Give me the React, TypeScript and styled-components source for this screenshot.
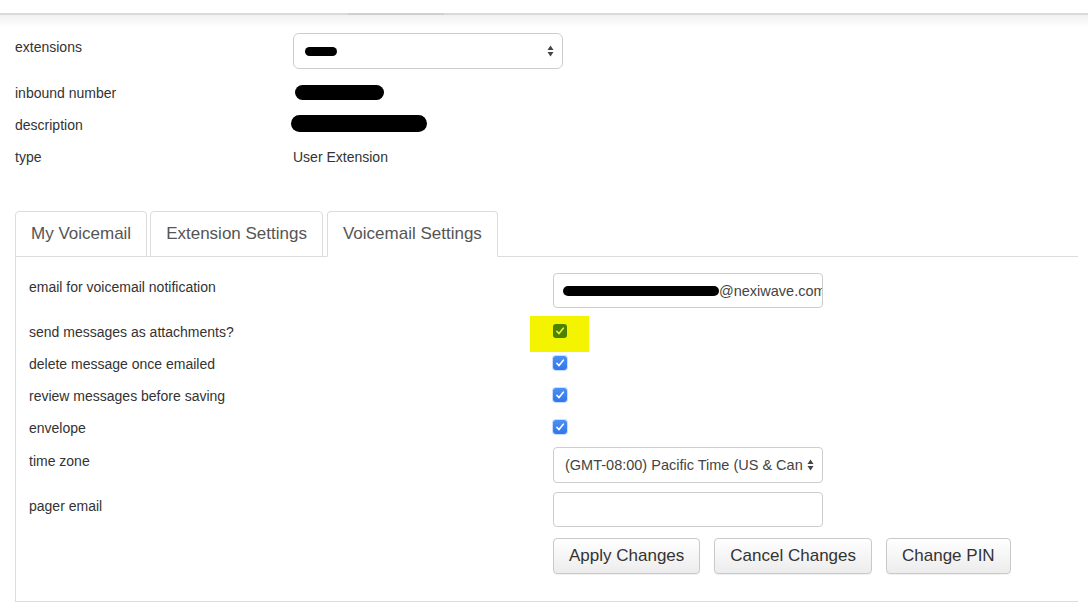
import React, { FC } from 'react';
import styled, { createGlobalStyle, css } from 'styled-components';

const GlobalStyle = createGlobalStyle`
  html, body {
    margin: 0;
    padding: 0;
    background: #fff;
  }
  body {
    font-family: 'Liberation Sans', Arial, sans-serif;
    color: #333;
    font-size: 14px;
  }
`;

const Page = styled.div`
  width: 1088px;
  height: 608px;
  overflow: hidden;
`;

const TopBar = styled.div`
  height: 13px;
  display: flex;
  align-items: flex-end;
  border-bottom: 2px solid #dadada;
`;

const TopMark = styled.div`
  width: 96px;
  height: 2px;
  margin-left: 348px;
  margin-bottom: -2px;
  background: #cfcfcf;
`;

const TopShade = styled.div`
  height: 13px;
  background: linear-gradient(#f1f1f1, #fff);
`;

const InfoGrid = styled.div`
  display: grid;
  grid-template-columns: 278px 270px;
  padding-left: 15px;
  margin-top: 5px;
`;

const InfoLabel = styled.div<{ $tall?: boolean }>`
  line-height: 20px;
  height: ${({ $tall }) => ($tall ? '44px' : '32px')};
  padding-top: ${({ $tall }) => ($tall ? '4px' : '6px')};
  box-sizing: border-box;
`;

const InfoValue = styled.div<{ $tall?: boolean }>`
  height: ${({ $tall }) => ($tall ? '44px' : '32px')};
  display: flex;
  align-items: ${({ $tall }) => ($tall ? 'flex-start' : 'center')};
  line-height: 20px;
`;

const Redaction = styled.span<{ $w: number; $h: number }>`
  display: inline-block;
  flex-shrink: 0;
  width: ${({ $w }) => $w}px;
  height: ${({ $h }) => $h}px;
  background: #000;
  border-radius: ${({ $h }) => $h / 2}px;
`;

const SelectBox = styled.div<{ $radius?: number }>`
  width: 270px;
  height: 36px;
  box-sizing: border-box;
  border: 1px solid #cdcdcd;
  border-radius: ${({ $radius }) => $radius ?? 4}px;
  display: flex;
  align-items: center;
  padding: 0 8px 0 11px;
  gap: 4px;
  background: #fff;
  font-size: 14px;
  color: #444;
`;

const SelectText = styled.span`
  flex: 1;
  overflow: hidden;
  white-space: nowrap;
  font-size: 14.5px;
`;

const Arrows: FC = () => (
  <svg width="7" height="12" viewBox="0 0 7 12">
    <path d="M3.5 0.5 L6.5 5 L0.5 5 Z" fill="#444" />
    <path d="M3.5 11.5 L6.5 7 L0.5 7 Z" fill="#444" />
  </svg>
);

const TabsWrap = styled.div`
  margin: 38px 10px 0 15px;
`;

const TabList = styled.div`
  display: flex;
  gap: 3px;
  border-bottom: 1px solid #dcdcdc;
`;

const Tab = styled.div<{ $active?: boolean }>`
  height: 44px;
  padding: 0 15px;
  display: flex;
  align-items: center;
  font-size: 17px;
  color: #555;
  border: 1px solid #dcdcdc;
  border-radius: 4px 4px 0 0;
  margin-bottom: -1px;
  background: #fff;
  ${({ $active }) =>
    $active &&
    css`
      border-bottom-color: #fff;
      margin-left: 1px;
    `}
`;

const Panel = styled.div`
  border-left: 1px solid #dcdcdc;
  border-bottom: 1px solid #dcdcdc;
  padding: 16px 0 27px 13px;
  display: grid;
  grid-template-columns: 524px 1fr;
`;

const FormLabel = styled.div<{ $h: number; $pt?: number }>`
  height: ${({ $h }) => $h}px;
  padding-top: ${({ $pt }) => $pt ?? 0}px;
  box-sizing: border-box;
  line-height: ${({ $pt }) => ($pt === undefined ? '32px' : '20px')};
`;

const FormValue = styled.div<{ $h: number; $pt?: number; $center?: boolean }>`
  height: ${({ $h }) => $h}px;
  padding-top: ${({ $pt }) => $pt ?? 0}px;
  box-sizing: border-box;
  display: flex;
  align-items: ${({ $center }) => ($center ? 'center' : 'flex-start')};
`;

const TextField = styled.div`
  width: 270px;
  height: 35px;
  box-sizing: border-box;
  border: 1px solid #cdcdcd;
  border-radius: 4px;
  display: flex;
  align-items: center;
  padding: 0 9px;
  overflow: hidden;
  white-space: nowrap;
  font-size: 14.5px;
  color: #444;
`;

const Highlight = styled.span`
  position: relative;
  z-index: 0;
  display: inline-flex;
  &::before {
    content: '';
    position: absolute;
    z-index: -1;
    top: -10px;
    bottom: -14px;
    left: -23px;
    right: -22px;
    background: #f4f400;
  }
`;

const CheckBox = styled.span<{ $tint?: boolean }>`
  width: 14px;
  height: 14px;
  margin-top: -2px;
  border-radius: 3px;
  display: inline-flex;
  align-items: center;
  justify-content: center;
  background: ${({ $tint }) => ($tint ? '#4c8200' : 'linear-gradient(#4a90f7, #2f76ee)')};
  box-shadow: ${({ $tint }) => ($tint ? 'none' : '0 0 0 1px rgba(47, 118, 238, 0.25)')};
`;

const Check: FC<{ color: string }> = ({ color }) => (
  <svg width="10" height="10" viewBox="0 0 10 10">
    <path d="M1.8 5.3 L4 7.6 L8.3 2.2" fill="none" stroke={color} strokeWidth="1.6" strokeLinecap="round" strokeLinejoin="round" />
  </svg>
);

const ButtonRow = styled.div`
  display: flex;
  gap: 14px;
`;

const Button = styled.button`
  height: 36px;
  padding: 0 15px;
  font-family: 'Liberation Sans', Arial, sans-serif;
  font-size: 17px;
  color: #333;
  border: 1px solid #c9c9c9;
  border-radius: 4px;
  background: linear-gradient(#ffffff, #ececec);
  box-shadow: 0 1px 1px rgba(0, 0, 0, 0.06);
`;

const checkRows = [
  { label: 'send messages as attachments?', highlighted: true },
  { label: 'delete message once emailed' },
  { label: 'review messages before saving' },
  { label: 'envelope' },
];

const App: FC = () => {
  return (
    <Page>
      <GlobalStyle />
      <TopBar>
        <TopMark />
      </TopBar>
      <TopShade />

      <InfoGrid>
        <InfoLabel $tall>extensions</InfoLabel>
        <InfoValue $tall>
          <SelectBox $radius={6}>
            <SelectText>
              <Redaction $w={32} $h={9} />
            </SelectText>
            <Arrows />
          </SelectBox>
        </InfoValue>
        <InfoLabel>inbound number</InfoLabel>
        <InfoValue>
          <Redaction $w={89} $h={15} style={{ marginLeft: 2, marginTop: -1 }} />
        </InfoValue>
        <InfoLabel>description</InfoLabel>
        <InfoValue>
          <Redaction $w={136} $h={17} style={{ marginLeft: -2, marginTop: -3 }} />
        </InfoValue>
        <InfoLabel>type</InfoLabel>
        <InfoValue>User Extension</InfoValue>
      </InfoGrid>

      <TabsWrap>
        <TabList>
          <Tab>My Voicemail</Tab>
          <Tab>Extension Settings</Tab>
          <Tab $active>Voicemail Settings</Tab>
        </TabList>
        <Panel>
          <FormLabel $h={43} $pt={4}>email for voicemail notification</FormLabel>
          <FormValue $h={43}>
            <TextField>
              <Redaction $w={156} $h={10} style={{ marginRight: 0 }} />
              @nexiwave.com
            </TextField>
          </FormValue>

          {checkRows.map((row) => (
            <React.Fragment key={row.label}>
              <FormLabel $h={32}>{row.label}</FormLabel>
              <FormValue $h={32} $center>
                {row.highlighted ? (
                  <Highlight>
                    <CheckBox $tint>
                      <Check color="#e6f03a" />
                    </CheckBox>
                  </Highlight>
                ) : (
                  <CheckBox>
                    <Check color="#fff" />
                  </CheckBox>
                )}
              </FormValue>
            </React.Fragment>
          ))}

          <FormLabel $h={48} $pt={7}>time zone</FormLabel>
          <FormValue $h={48} $pt={3}>
            <SelectBox>
              <SelectText>(GMT-08:00) Pacific Time (US &amp; Canada)</SelectText>
              <Arrows />
            </SelectBox>
          </FormValue>

          <FormLabel $h={46} $pt={4}>pager email</FormLabel>
          <FormValue $h={46}>
            <TextField />
          </FormValue>

          <div />
          <ButtonRow>
            <Button>Apply Changes</Button>
            <Button>Cancel Changes</Button>
            <Button>Change PIN</Button>
          </ButtonRow>
        </Panel>
      </TabsWrap>
    </Page>
  );
};

export default App;
